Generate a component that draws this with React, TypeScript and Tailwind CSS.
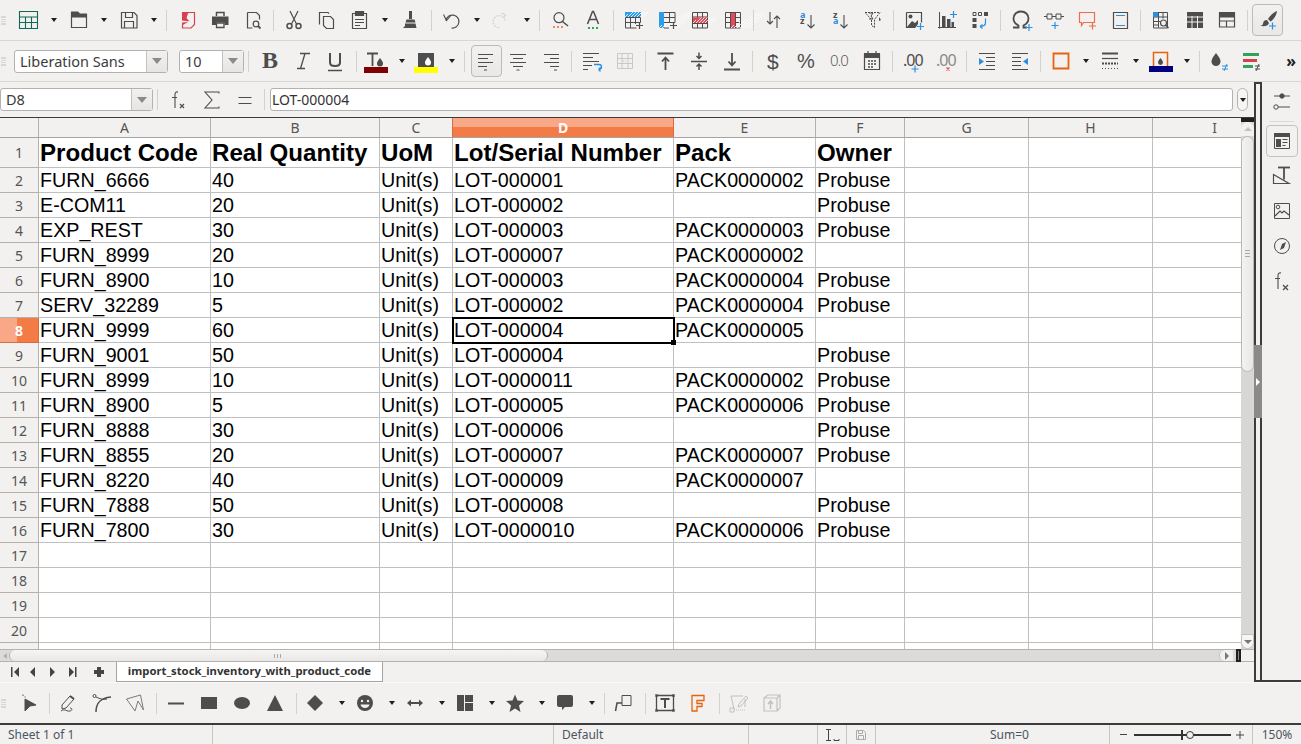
import type { ReactNode } from "react";

const UI = "font-['Noto_Sans','Open_Sans',sans-serif]";

function Ic({ children }: { children: ReactNode }) {
  return (
    <svg width="24" height="24" viewBox="0 0 24 24" fill="none" stroke="#4d4d4d" strokeWidth="1.2" className="block shrink-0 overflow-visible">
      {children}
    </svg>
  );
}

const boxed = "h-8 w-[31px] rounded-[4px] border border-[#bdbbb8] bg-gradient-to-b from-[#f2f1f0] to-[#e9e8e6]";

function Btn({ children, style }: { children: ReactNode; style?: string }) {
  return <div className={`flex shrink-0 items-center ${style ?? "h-[30px] w-[33px] pl-1"}`}>{children}</div>;
}

function Dd({ narrow }: { narrow?: boolean }) {
  return (
    <div className={`flex shrink-0 justify-center ${narrow ? "w-[17px]" : "w-[17.25px]"}`}>
      <div className="h-0 w-0 border-x-[3px] border-t-[4px] border-x-transparent border-t-[#1f1f1f]" />
    </div>
  );
}

function Sep() {
  return (
    <div className="flex w-2 shrink-0 justify-center">
      <div className="h-[21px] w-px bg-[#d3d1ce]" />
    </div>
  );
}

function Grip() {
  return <div className="ml-px h-[9px] w-[5px] shrink-0 border-y border-[#d9d7d4] bg-[linear-gradient(#d9d7d4_1px,transparent_1px)] bg-[length:5px_2px]" />;
}

const hatch = (x: number, y: number, w: number, h: number, c: string) => (
  <g>
    <rect x={x} y={y} width={w} height={h} fill={c} stroke="none" />
    {Array.from({ length: Math.ceil((w + h) / 3) }).map((_, i) => (
      <path key={i} d={`M${x + i * 3} ${y + h}l${Math.min(h, 3 + i * 3)} ${-Math.min(h, 3 + i * 3)}`} stroke="#fff" strokeWidth=".8" />
    ))}
  </g>
);

const Plus = ({ x, y, c = "#2b8fe0" }: { x: number; y: number; c?: string }) => (
  <path d={`M${x - 3.5} ${y}h7M${x} ${y - 3.5}v7`} stroke={c} strokeWidth="1.2" />
);

const icons: Record<string, ReactNode> = {
  table: (
    <g stroke="#0e6b55">
      <path d="M3.5 3.5h18v17h-18zM3.5 9h18M3.5 14.5h18M9.500 9v11.500M15.500 9v11.500" strokeWidth="1.100" />
    </g>
  ),
  open: (
    <g>
      <path d="M5 3.500h7l2 2h7v4H5z" fill="#4d4d4d" stroke="none" />
      <path d="M5.500 4v15.500h15V6" />
    </g>
  ),
  save: <path d="M4.500 4.500h12.500l3 3v12.500h-15.500zM8.500 4.500v5h7v-5M7.500 20v-6.500h9v6.500" />,
  pdf: (
    <g>
      <path d="M12 4.500h7.500v12l-3.500 3.500h-8.500v-3" stroke="#d8404f" />
      <path d="M7 4h6.500l-2 6 3 3.500-7.500-1z" fill="#d8404f" stroke="none" />
      <path d="M7 14.500l6-.5-6 3.500z" fill="#d8404f" stroke="none" />
    </g>
  ),
  print: (
    <g>
      <path d="M8.500 8V4.500h7.500V8" strokeWidth="1.500" />
      <path d="M4 8.500h16.500v8.500h-4v-2.500H8V17H4z" fill="#4d4d4d" stroke="none" />
      <path d="M8.500 15h7.500v4.500H8.500z" strokeWidth="1.300" />
    </g>
  ),
  preview: (
    <g>
      <path d="M6.500 4.500h9l3 3v4M6.500 4.500V20h5" />
      <circle cx="15" cy="16" r="2.800" />
      <path d="M17 18l2.500 2.500" strokeWidth="1.800" />
    </g>
  ),
  cut: (
    <g>
      <path d="M8 3l6.500 13M16 3L9.500 16" />
      <circle cx="7.500" cy="18" r="2.500" strokeWidth="1.500" />
      <circle cx="16.500" cy="18" r="2.500" strokeWidth="1.500" />
    </g>
  ),
  copy: (
    <g>
      <path d="M4.500 16.500V4.500h8.500l1 1" />
      <path d="M8.500 8.500h7l3 3v9h-7l-3-3z" fill="#f2f1f0" />
    </g>
  ),
  paste: (
    <g transform="translate(-1 0)">
      <path d="M8 5.500H5.500v15h14v-15H17" />
      <path d="M8.500 3.500h8v4h-8z" fill="#4d4d4d" />
      <path d="M8 11.500h9M8 14.500h9M8 17.500h5" strokeWidth="1" />
    </g>
  ),
  clone: (
    <g>
      <path d="M12.500 3v8" strokeWidth="3" />
      <path d="M8.500 11.500h8l1 3h-10z" fill="#4d4d4d" stroke="none" />
      <path d="M7 15.500h10.500l1 4.500H5l2-2z" fill="#4d4d4d" stroke="none" />
    </g>
  ),
  undo: (
    <g>
      <path d="M7 12.500a6.500 6.500 0 1 1 5.500 7.500" strokeWidth="1.200" />
      <path d="M4.500 6.500l3 6 4-4.500" strokeWidth="1.100" />
    </g>
  ),
  redo: (
    <g stroke="#d4d3d1">
      <path d="M16 12.500a6 6 0 1 0-5 7" strokeDasharray="2 1" />
      <path d="M12.500 5l4 2-2 3" />
    </g>
  ),
  find: (
    <g>
      <circle cx="11" cy="9.700" r="5" />
      <path d="M14.500 13.500l5.500 4.500" strokeWidth="1.500" />
      <path d="M5 19h2M9 19h2M13 19h2" stroke="#f08a65" strokeWidth="1.800" />
    </g>
  ),
  fontA: (
    <g>
      <path d="M6.500 16L11.500 3.500h1L17.500 16M8.500 11.500h7" strokeWidth="1.500" />
      <path d="M7 20h2M11 20h2M15 20h2" stroke="#2fa35a" strokeWidth="1.800" />
    </g>
  ),
  rowIns: (
    <g>
      {hatch(3, 4, 16, 5, "#2f9ce8")}
      <path d="M3.500 9.500h15M3.500 9.500v10.500h11M8.500 9.500v10.500M13.500 9.500v6.500M3.500 14.500h15M18.500 9.500v5" strokeWidth="1" />
      <Plus x={17.500} y={17.500} c="#4d4d4d" />
    </g>
  ),
  colIns: (
    <g>
      {hatch(4, 4, 5, 16, "#2f9ce8")}
      <path d="M9 4.500h11M9 9.500h11M9 14.500h11M9 20h5M14.500 4.500v10M20 4.500v10" strokeWidth="1" />
      <Plus x={18.500} y={17.500} c="#4d4d4d" />
    </g>
  ),
  rowDel: (
    <g>
      <path d="M4.500 4.500h15v15.500h-15zM4.500 9h15M4.500 15.500h15M9.500 4.500v5M14.500 4.500v5M9.500 15.500v4.500M14.500 15.500v4.500" strokeWidth="1" />
      {hatch(5, 9.500, 14, 5.500, "#e8495a")}
    </g>
  ),
  colDel: (
    <g>
      <path d="M4.500 4.500h15v15.500h-15zM4.500 9.500h15M4.500 14.500h15M9.500 4.500v15.500M14.500 4.500v15.500" strokeWidth="1" />
      {hatch(10, 5, 4, 15, "#e8495a")}
    </g>
  ),
  sort: <path d="M8 4v12M5 13l3 3 3-3M15 20V8M12 11l3-3 3 3" strokeWidth="1.100" />,
  sortAz: (
    <g>
      <text x="5" y="9.500" fontSize="9" fontWeight="700" fill="#2b8fe0" stroke="none" fontFamily="Noto Sans">a</text>
      <text x="5" y="16" fontSize="9" fontWeight="700" fill="#4d4d4d" stroke="none" fontFamily="Noto Sans">z</text>
      <path d="M16 7v13M12.500 16.500l3.500 3.500 3.500-3.500" strokeWidth="1.100" />
    </g>
  ),
  sortZa: (
    <g>
      <text x="5" y="9.500" fontSize="9" fontWeight="700" fill="#4d4d4d" stroke="none" fontFamily="Noto Sans">z</text>
      <text x="5" y="16" fontSize="9" fontWeight="700" fill="#2b8fe0" stroke="none" fontFamily="Noto Sans">a</text>
      <path d="M16 7v13M12.500 16.500l3.500 3.500 3.500-3.500" strokeWidth="1.100" />
    </g>
  ),
  filter: (
    <g strokeWidth="1">
      <path d="M4 4.500h15l-5.500 7v8l-3-2v-6z" strokeDasharray="2 1" />
      <path d="M8 5h4l-2 3 2 3H8" />
      <path d="M18 9l2 3-2 1z" fill="#4d4d4d" stroke="none" />
    </g>
  ),
  image: (
    <g>
      <path d="M4.500 4.500h15v10M4.500 4.500v15h9" />
      <circle cx="8.500" cy="8.500" r="2" fill="#4d4d4d" stroke="none" />
      <path d="M5 19l5-6 3 2 3-3v4l-2 3z" fill="#4d4d4d" stroke="none" />
      <Plus x={18.500} y={18.500} />
    </g>
  ),
  chart: (
    <g>
      <path d="M4.500 4v16.500M3 19.500h18" strokeWidth="1" />
      <path d="M7 8h3.500v11H7zM12 11h3.500v8H12zM16.500 14H19v5h-2.500z" fill="#4d4d4d" stroke="none" />
      <Plus x={18.500} y={6.500} />
    </g>
  ),
  pivot: (
    <g>
      <path d="M5 4.500h3v3H5zM10.500 4.500h3v3h-3z" strokeWidth="1" />
      <path d="M16 4h4v4h-4zM4.500 10h4v4h-4zM4.500 16h4v4h-4z" fill="#4d4d4d" stroke="none" />
      <path d="M17.500 10.500v4c0 3-2 4-5.500 4M12 18.500l2.500-2M12 18.500l2.500 2" stroke="#2b8fe0" />
    </g>
  ),
  omega: (
    <g>
      <path d="M4 19.500h5.500v-2C6.500 16 4.500 13.500 4.500 10.500 4.500 6.500 7.500 3.500 12 3.500s7.500 3 7.500 7c0 3-2 5.500-5 7v2H18" strokeWidth="1.800" />
      <Plus x={20} y={19.500} />
    </g>
  ),
  hyper: (
    <g strokeWidth="1">
      <path d="M2 8.500h3M5 6h5v5H5zM10 8.500h4M14 6h5v5h-5zM19 8.500h3" />
      <Plus x={13} y={17.500} />
    </g>
  ),
  comment: (
    <g>
      <path d="M4.500 4.500h15v10h-11l-2 3v-3h-2z" stroke="#ee6c4d" />
      <Plus x={17.500} y={18} c="#ee6c4d" />
    </g>
  ),
  header: (
    <g>
      <path d="M5.500 4.500h14v16h-14z" />
      <path d="M8 7.500h9M8 17.500h9" stroke="#2b8fe0" />
    </g>
  ),
  define: (
    <g>
      <path d="M4.500 4.500h14v15.500h-14zM4.500 9h14M4.500 13.500h7M4.500 17h5M9.500 4.500v15M14 4.500v6" strokeWidth="1" />
      <rect x="4" y="4" width="5" height="5" fill="#2b8fe0" stroke="none" />
      <circle cx="14.500" cy="15" r="3" fill="#f2f1f0" strokeWidth="1.200" />
      <path d="M16.500 17l3 3" strokeWidth="1.500" />
    </g>
  ),
  grid: (
    <g>
      <path d="M5 4h16v16H5z" fill="#4d4d4d" stroke="none" />
      <path d="M5 9h16M5 14h16M10 8v12M15.500 8v12" stroke="#f2f1f0" strokeWidth="1" />
    </g>
  ),
  freeze: (
    <g>
      <path d="M4 4.500h16v5H4z" fill="#4d4d4d" stroke="none" />
      <path d="M4.500 4.500h15v14.500h-15zM4.500 13h15M11.500 13v6" />
    </g>
  ),
  brush: (
    <g>
      <path d="M21 3c-3 1-7 4.500-9 8l2.500 2.500c3.500-2 6-6.500 6.500-10.500z" fill="#4d4d4d" stroke="none" />
      <path d="M11 12c-3 0-4 2-4 4-.5 1-1.500 1.500-3 1.500 3 1.500 8 1 9-2.500z" fill="#4d4d4d" stroke="none" />
      <Plus x={16.500} y={18} />
    </g>
  ),
  bold: <text x="5" y="19" fontSize="24" fontWeight="700" fontFamily="Liberation Serif" fill="#4d4d4d" stroke="none">B</text>,
  italic: <path d="M10 4.500h10M15 4.500L10.500 19.500M7 19.500h8" strokeWidth="1.300" />,
  underline: (
    <g>
      <path d="M7 4v9.500c0 2.500 2 3.500 5 3.500s5-1 5-3.500V4" strokeWidth="2" />
      <path d="M5 21.500h14" strokeWidth="1.500" />
    </g>
  ),
  fontColor: (
    <g>
      <path d="M3 4.500h11M8.500 4.500V17" strokeWidth="1.800" />
      <path d="M16 9c-2 2.500-3 4-3 5.500a3 3 0 0 0 6 0C19 13 18 11.500 16 9z" fill="#4d4d4d" stroke="none" />
      <rect x="0" y="18" width="24" height="6" fill="#800000" stroke="none" />
    </g>
  ),
  bgColor: (
    <g>
      <path d="M4 4h16v14H4z" fill="#4d4d4d" stroke="none" />
      <path d="M14 8c-2 2.500-3 4-3 5.500a3 3 0 0 0 6 0c0-1.500-1-3-3-5.500z" fill="#fff" stroke="none" />
      <rect x="0" y="18" width="24" height="6" fill="#ffff00" stroke="none" />
    </g>
  ),
  alignL: <path d="M4 5.500h15M4 9.500h10M4 13.500h15M4 17.500h9M10 21h3" strokeWidth="1" />,
  alignC: <path d="M4 5.500h16M7 9.500h10M4 13.500h16M7 17.500h10M10.500 21h3" strokeWidth="1" />,
  alignR: <path d="M5 5.500h15M11 9.500h9M5 13.500h15M11 17.500h9M15 21h3" strokeWidth="1" />,
  wrap: (
    <g strokeWidth="1">
      <path d="M3 4.500h16M3 8.500h10M3 12.500h16M3 16.500h9M3 20.500h5" />
      <path d="M14 15.500h5c2 0 2.500 1 2.500 2.500s-.5 2.500-3 2.500M18.500 20.500l2-2M18.500 20.500l2 2" stroke="#2b8fe0" strokeWidth="1.300" />
    </g>
  ),
  merge: (
    <g stroke="#c9c8c6" strokeWidth="1">
      <path d="M4.500 4.500h15v15h-15zM4.500 9.500h15M4.500 14.500h15M9 4.500v15M15 4.500v15" />
      <path d="M10 12h4" strokeDasharray="1 1" />
    </g>
  ),
  top: <path d="M3.500 4.500h16M11.500 9v12M8 12.500l3.500-4 3.500 4" strokeWidth="1.800" />,
  middle: <path d="M4 12.500h16M12 3.500v6M9.500 7l2.500 2.500L14.500 7M12 21v-6M9.500 17.500L12 15l2.500 2.500" strokeWidth="1.500" />,
  bottom: <path d="M4 20.500h16M12 4v12M8.500 12.500l3.500 4 3.500-4" strokeWidth="1.800" />,
  dollar: <text x="6" y="20" fontSize="21" fontFamily="Liberation Sans" fill="#4d4d4d" stroke="none">$</text>,
  percent: <text x="3" y="19" fontSize="20" fontFamily="Liberation Sans" fill="#4d4d4d" stroke="none">%</text>,
  number: <text x="3" y="17" fontSize="15" fontWeight="300" fontFamily="Noto Sans" fill="#5a5a5a" stroke="none" letterSpacing="-1">0.0</text>,
  calendar: (
    <g>
      <path d="M4.500 5.500h15v15h-15z" />
      <path d="M4 4h16v5H4z" fill="#4d4d4d" stroke="none" />
      <path d="M8 2v3M16 2v3" />
      <path d="M8 12h2M11 12h2M14 12h2M8 15h2M11 15h2M14 15h2M8 18h2M11 18h2" strokeWidth="1.500" />
    </g>
  ),
  decAdd: (
    <g>
      <text x="2" y="17" fontSize="16" fontFamily="Noto Sans" fill="#4d4d4d" stroke="none" letterSpacing="-1">.00</text>
      <Plus x={14} y={20} />
    </g>
  ),
  decDel: (
    <g>
      <text x="2" y="17" fontSize="16" fontFamily="Noto Sans" fill="#8a8a8a" stroke="none" letterSpacing="-1">.00</text>
      <path d="M12.500 18.500l3 3M15.500 18.500l-3 3" stroke="#e8495a" strokeWidth="1.200" />
    </g>
  ),
  indentUp: (
    <g strokeWidth="1">
      <path d="M4 4.500h16M11 8.500h9M11 12.500h9M11 16.500h9M4 20.500h16" />
      <path d="M4 9l5 3.500-5 3.500z" fill="#2b8fe0" stroke="none" />
    </g>
  ),
  indentDown: (
    <g strokeWidth="1">
      <path d="M4 4.500h16M4 8.500h9M4 12.500h9M4 16.500h9M4 20.500h16" />
      <path d="M20 9l-5 3.500 5 3.500z" fill="#2b8fe0" stroke="none" />
    </g>
  ),
  borders: <path d="M4.500 4.500h15v15h-15z" stroke="#e8620e" strokeWidth="1.800" />,
  lines: (
    <g strokeWidth="1">
      <path d="M3 4.500h16" strokeWidth="2" />
      <path d="M3 9.500h16" strokeWidth="1.200" />
      <path d="M3 14.500h16" strokeWidth="2" strokeDasharray="2 1" />
      <path d="M3 19.500h16" strokeWidth="1" strokeDasharray="1 2" />
    </g>
  ),
  borderColor: (
    <g>
      <path d="M4.500 3.500h14v15h-14z" stroke="#e8620e" strokeWidth="1.500" />
      <path d="M11.500 9c-1.500 2-2.500 3-2.500 4.500a2.500 2.500 0 0 0 5 0c0-1.500-1-2.500-2.500-4.500z" fill="#4d4d4d" stroke="none" />
      <rect x="0" y="17" width="24" height="6" fill="#000080" stroke="none" />
    </g>
  ),
  condDrop: (
    <g>
      <path d="M9 4c-3 4-4.500 6-4.500 8.500a4.500 4.500 0 0 0 9 0C13.500 10 12 8 9 4z" fill="#4d4d4d" stroke="none" />
      <path d="M15 17h6M15 20h6M17 22l3-7" stroke="#2b8fe0" strokeWidth="1" />
    </g>
  ),
  condBars: (
    <g>
      <path d="M3 4h16v3H3z" fill="#2fa35a" stroke="none" />
      <path d="M3 10h14v3H3z" fill="#d8404f" stroke="none" />
      <path d="M3 16h10v3H3z" fill="#2fa35a" stroke="none" />
      <path d="M15 17h5M15 20h5M16 22l3-7" strokeWidth="1" />
    </g>
  ),
  select: (
    <g>
      <path d="M9 8l11 6-6 1-5 5z" fill="#4d4d4d" strokeWidth="1" />
      <path d="M7 3.500v1.500M9 5.500v1" strokeWidth="1" />
    </g>
  ),
  freehand: (
    <g strokeWidth="1">
      <path d="M5 14l8-9 4 3-8 9-4 1z" />
      <path d="M13 5l4 3" strokeWidth="2" />
      <path d="M4 20c4-3 6 1 9 0s2-3 0-3" />
    </g>
  ),
  curve: (
    <g strokeWidth="1.500">
      <path d="M6 21c0-9 4-14 15-15" />
      <circle cx="4.500" cy="5" r="1.500" strokeWidth="1" />
      <path d="M6 6c4 2 8 3 11 2" strokeWidth="1" />
    </g>
  ),
  polygon: <path d="M3.500 8l14-4 3 15-5.500-9-3 10z" stroke="#7a7a7a" strokeWidth="1" />,
  line: <path d="M4 12.500h16" strokeWidth="2" />,
  rect: <path d="M4 6h16v12H4z" fill="#4d4d4d" stroke="none" />,
  ellipse: <ellipse cx="12" cy="12" rx="8" ry="6" fill="#4d4d4d" stroke="none" />,
  triangle: <path d="M12 4l8 16H4z" fill="#4d4d4d" stroke="none" />,
  diamond: <path d="M11 4l8 8-8 8-8-8z" fill="#4d4d4d" stroke="none" />,
  smile: (
    <g>
      <circle cx="11" cy="12" r="8" fill="#4d4d4d" stroke="none" />
      <circle cx="8" cy="10" r="1.200" fill="#f2f1f0" stroke="none" />
      <circle cx="14" cy="10" r="1.200" fill="#f2f1f0" stroke="none" />
      <path d="M6.500 13.500h9c-.5 2-2 3.500-4.500 3.500s-4-1.500-4.500-3.500z" fill="#f2f1f0" stroke="none" />
    </g>
  ),
  arrow: <path d="M3 12l4-3.500V11h8V8.500l4 3.500-4 3.500V13H7v2.500z" fill="#4d4d4d" stroke="none" />,
  flow: <path d="M3 4h7v16H3zM11 4h8v7h-8zM11 12h8v8h-8z" fill="#4d4d4d" stroke="none" />,
  star: <path d="M11 3.500l2.500 6 6.500.5-5 4.500 1.500 6.500-5.500-3.500-5.500 3.500 1.500-6.500-5-4.500 6.500-.5z" fill="#4d4d4d" stroke="none" />,
  callout: <path d="M5 4h12a2 2 0 0 1 2 2v8a2 2 0 0 1-2 2h-6l-3 3v-3H5a2 2 0 0 1-2-2V6a2 2 0 0 1 2-2z" fill="#4d4d4d" stroke="none" />,
  connector: (
    <g>
      <path d="M3.500 20l1.500-8h5" strokeWidth="1.500" />
      <path d="M10 4.500h9v10h-9z" strokeWidth="1" />
    </g>
  ),
  textbox: (
    <g>
      <path d="M3.500 4.500h17v15h-17z" strokeWidth="1.300" />
      <path d="M7.500 8h9M12 8v9" strokeWidth="2" />
      <path d="M2 3h3v3H2zM19 3h3v3h-3zM2 18h3v3H2zM19 18h3v3h-3z" fill="#4d4d4d" stroke="none" opacity=".6" />
    </g>
  ),
  fontwork: <path d="M6 4.500h12v5h-7v3h5v3h-5V20H6z" stroke="#e8620e" strokeWidth="1.300" />,
  points: (
    <g stroke="#c2c1bf" strokeWidth="1">
      <path d="M4 5h12M18 8v8M4 5l3 13M12 13L19 5l2 2-7 8-3 1z" />
      <path d="M3 17h4v4H3z" />
      <path d="M7 19h12" strokeDasharray="1 1" />
    </g>
  ),
  extrude: (
    <g stroke="#c2c1bf" strokeWidth="1.200">
      <path d="M4 7h13v13H4zM4 7l4-3h12v13l-3 3M17 7l3-3" />
      <path d="M10.500 18v-7M8 13l2.500-3 2.500 3" strokeWidth="1.500" />
    </g>
  ),
  props: (
    <g strokeWidth="1">
      <path d="M4 7h16M4 18h16" />
      <circle cx="12" cy="7" r="2.200" fill="#4d4d4d" />
      <circle cx="6" cy="18" r="2.200" fill="#f2f1f0" />
    </g>
  ),
  styles: (
    <g>
      <path d="M4.500 4.500h15v15h-15z" strokeWidth="1" />
      <path d="M4 4h16v4H4zM6 10h5v8H6z" fill="#4d4d4d" stroke="none" />
      <path d="M12.500 10.500h5M12.500 13.500h5M12.500 16.500h3" strokeWidth="1" />
    </g>
  ),
  shapes: (
    <g strokeWidth="1.200">
      <path d="M8 3.500h12" strokeWidth="1.800" />
      <path d="M14 3.500v12" strokeWidth="1.800" />
      <path d="M3.500 10.500L19 19.500H3.500z" />
    </g>
  ),
  gallery: (
    <g strokeWidth="1">
      <path d="M4.500 4.500h15v15h-15z" />
      <circle cx="8" cy="8" r="1.800" />
      <path d="M5 17l5-5 2 2 2-2 5 4" strokeWidth="1.200" />
    </g>
  ),
  navigator: (
    <g strokeWidth="1">
      <circle cx="12" cy="12" r="7.500" />
      <path d="M16 8l-2 6-4 2 2-6z" fill="#4d4d4d" stroke="none" />
    </g>
  ),
  fxSide: (
    <g>
      <path d="M11 4c-2-.5-3 .5-3 2.500V20M5 9.500h5" strokeWidth="1.100" />
      <path d="M13 16l5 5M18 16l-5 5" strokeWidth="1.300" />
    </g>
  ),
  sum: <path d="M19 5.500V4H5l7 8-7 8h14v-1.500" strokeWidth="1.100" />,
  equal: <path d="M5.500 9.500h13M5.500 15.500h13" strokeWidth="1.200" />,
  fx: (
    <g>
      <path d="M11 4c-2-.5-3 .5-3 2.500V20M5 9.500h5" strokeWidth="1.100" />
      <path d="M13 16l4 4M17 16l-4 4" strokeWidth="1.200" />
    </g>
  ),
};

const Icon = ({ n, style }: { n: string; style?: string }) => (
  <Btn style={style}>
    <Ic>{icons[n]}</Ic>
  </Btn>
);

function Combo({ w, text }: { w: string; text: string }) {
  return (
    <div className={`flex h-[23px] shrink-0 rounded-[3px] border border-[#b4b2ae] bg-white ${w}`}>
      <div className="flex-1 truncate pl-[5px] text-[14.5px] leading-[21px] text-[#3c3c3c]">{text}</div>
      <div className="flex w-[21px] items-center justify-center border-l border-[#c4c2bf] bg-gradient-to-b from-[#f2f1f0] to-[#e6e5e3]">
        <div className="h-0 w-0 border-x-[5px] border-t-[6px] border-x-transparent border-t-[#8a8a8a]" />
      </div>
    </div>
  );
}

const cols: { name: string; w: string }[] = [
  { name: "A", w: "w-[172px]" },
  { name: "B", w: "w-[169px]" },
  { name: "C", w: "w-[73px]" },
  { name: "D", w: "w-[221px]" },
  { name: "E", w: "w-[142px]" },
  { name: "F", w: "w-[89px]" },
  { name: "G", w: "w-[124px]" },
  { name: "H", w: "w-[124px]" },
  { name: "I", w: "w-[124px]" },
];

const rows: string[][] = [
  ["Product Code", "Real Quantity", "UoM", "Lot/Serial Number", "Pack", "Owner"],
  ["FURN_6666", "40", "Unit(s)", "LOT-000001", "PACK0000002", "Probuse"],
  ["E-COM11", "20", "Unit(s)", "LOT-000002", "", "Probuse"],
  ["EXP_REST", "30", "Unit(s)", "LOT-000003", "PACK0000003", "Probuse"],
  ["FURN_8999", "20", "Unit(s)", "LOT-000007", "PACK0000002", ""],
  ["FURN_8900", "10", "Unit(s)", "LOT-000003", "PACK0000004", "Probuse"],
  ["SERV_32289", "5", "Unit(s)", "LOT-000002", "PACK0000004", "Probuse"],
  ["FURN_9999", "60", "Unit(s)", "LOT-000004", "PACK0000005", ""],
  ["FURN_9001", "50", "Unit(s)", "LOT-000004", "", "Probuse"],
  ["FURN_8999", "10", "Unit(s)", "LOT-0000011", "PACK0000002", "Probuse"],
  ["FURN_8900", "5", "Unit(s)", "LOT-000005", "PACK0000006", "Probuse"],
  ["FURN_8888", "30", "Unit(s)", "LOT-000006", "", "Probuse"],
  ["FURN_8855", "20", "Unit(s)", "LOT-000007", "PACK0000007", "Probuse"],
  ["FURN_8220", "40", "Unit(s)", "LOT-000009", "PACK0000007", ""],
  ["FURN_7888", "50", "Unit(s)", "LOT-000008", "", "Probuse"],
  ["FURN_7800", "30", "Unit(s)", "LOT-0000010", "PACK0000006", "Probuse"],
  [],
  [],
  [],
  [],
  [],
];

function Sheet() {
  return (
    <div className="flex min-h-0 flex-1">
      <div className="min-w-0 flex-1 overflow-hidden">
        {/* column header */}
        <div className="flex h-5 border-b border-[#a6a4a0]">
          <div className="w-[39px] shrink-0 border-r border-[#b4b2ae] bg-[#f2f1f0]" />
          {cols.map((c) =>
            c.name === "D" ? (
              <div key={c.name} className="-ml-px flex w-[222px] shrink-0 items-center justify-center border-x border-[#d96b3c] bg-[linear-gradient(#f9a887_0%,#f9a887_47%,#f37b46_47%,#f37b46_100%)] text-[14px] font-bold text-white">
                {c.name}
              </div>
            ) : (
              <div key={c.name} className={`flex shrink-0 items-center justify-center border-r border-[#b4b2ae] bg-[#f2f1f0] text-[14px] text-[#555] ${c.w}`}>
                {c.name}
              </div>
            ),
          )}
        </div>
        {rows.map((r, i) => (
          <div key={i} className={`flex ${i === 0 ? "h-[30px]" : "h-[25px]"}`}>
            <div
              className={`flex w-[39px] shrink-0 items-center justify-center border-b border-r text-[14px] ${
                i === 7
                  ? "border-[#d96b3c] bg-[linear-gradient(90deg,#f9a887_0%,#f9a887_45%,#f37b46_45%,#f37b46_100%)] font-bold text-white"
                  : "border-[#b4b2ae] bg-[#f2f1f0] text-[#555]"
              }`}
            >
              {i < 20 ? i + 1 : ""}
            </div>
            {cols.map((c, j) => (
              <div
                key={c.name}
                className={`relative flex shrink-0 items-center overflow-visible whitespace-nowrap border-b border-r border-[#c0c0c0] bg-white pl-px pt-0.5 font-['Liberation_Sans',Arial,sans-serif] text-black ${c.w} ${
                  i === 0 ? "text-[24.1px] font-bold" : "text-[19.7px]"
                } ${i === 7 && j === 3 ? "z-10 outline-2 -outline-offset-1 outline-black" : ""}`}
              >
                {r[j]}
                {i === 7 && j === 3 && <div className="absolute -bottom-[3px] -right-[3px] h-[5px] w-[5px] bg-black" />}
              </div>
            ))}
          </div>
        ))}
      </div>
      {/* vertical scrollbar */}
      <div className="flex w-[13px] shrink-0 flex-col bg-[#d8d7d5]">
        <div className="h-1 shrink-0 bg-[#1f1f1f]" />
        <div className="flex h-3.5 shrink-0 items-center justify-center rounded-t-full bg-[#f2f1f0]">
          <div className="h-0 w-0 border-x-[4px] border-b-[4px] border-x-transparent border-b-[#c4c2bf]" />
        </div>
        <div className="flex h-[236px] shrink-0 items-center justify-center rounded-full border border-[#bbb9b6] bg-gradient-to-r from-[#f4f3f2] to-[#e8e7e5]">
          <div className="h-[9px] w-[5px] bg-[linear-gradient(#aaa_1px,transparent_1px)] bg-[length:5px_3px]" />
        </div>
        <div className="flex-1" />
        <div className="flex h-[15px] shrink-0 items-center justify-center rounded-b-full border border-[#c4c2bf] bg-[#f6f5f4]">
          <div className="h-0 w-0 border-x-[4px] border-t-[4px] border-x-transparent border-t-[#777]" />
        </div>
      </div>
    </div>
  );
}

function HScroll() {
  return (
    <div className="flex h-[13px] shrink-0 items-center border-y border-[#b4b2ae] bg-[#dcdbd9]">
      <div className="flex w-[9px] shrink-0 items-center justify-center">
        <div className="h-0 w-0 border-y-[3px] border-r-[4px] border-y-transparent border-r-[#b4b2ae]" />
      </div>
      <div className="flex h-[11px] w-[539px] shrink-0 items-center justify-center rounded-full border-x border-[#b4b2ae] bg-gradient-to-b from-[#f6f5f4] to-[#e9e8e6]">
        <div className="h-[4px] w-[9px] bg-[linear-gradient(90deg,#aaa_1px,transparent_1px)] bg-[length:3px_4px]" />
      </div>
      <div className="flex-1" />
      <div className="flex h-[11px] w-[14px] shrink-0 items-center justify-center rounded-l-full border-l border-[#c4c2bf] bg-[#f2f1f0]">
        <div className="h-0 w-0 border-y-[4px] border-l-[4px] border-y-transparent border-l-[#777]" />
      </div>
      <div className="w-[3px] shrink-0" />
      <div className="flex h-[13px] w-[5px] shrink-0 justify-center bg-[#1f1f1f]">
        <div className="h-[9px] w-px self-center bg-[#8a8a8a]" />
      </div>
      <div className="w-[13px] shrink-0 self-stretch bg-[#f2f1f0]" />
    </div>
  );
}

function Tabs() {
  return (
    <div className="flex h-5 shrink-0 items-start bg-[#f2f1f0]">
      <div className="flex w-[116px] shrink-0 items-center self-center">
        <svg width="116" height="16" viewBox="0 0 116 16" fill="#444" className="block">
          <path d="M11 3h1.500v10H11zM19 3v10l-5-5zM30 8l5-5v10zM50 3l5 5-5 5zM69 3l5 5-5 5zM75 3h1.500v10H75zM97 3h4v3h3v4h-3v3h-4v-3h-3V6h3z" />
        </svg>
      </div>
      <div className="flex h-5 w-[267px] items-center justify-center border-x border-b border-[#a6a4a0] bg-white text-[11.3px] font-bold text-[#333]">
        import_stock_inventory_with_product_code
      </div>
    </div>
  );
}

function StatusCell({ w, children, center }: { w: string; children?: ReactNode; center?: boolean }) {
  return (
    <div className={`flex h-full shrink-0 items-center border-r border-[#c9c7c4] ${w} ${center ? "justify-center" : "pl-2"}`}>
      {children}
    </div>
  );
}

function Toolbar({ children, extra }: { children: ReactNode; extra: string }) {
  return <div className={`flex h-[41px] shrink-0 items-center bg-[#f2f1f0] ${extra}`}>{children}</div>;
}

export default function App() {
  return (
    <div className={`flex h-[744px] w-[1301px] flex-col overflow-hidden bg-[#f2f1f0] text-[#3c3c3c] ${UI}`}>
      <Toolbar extra="border-b border-[#d9d7d4]">
        <Grip />
        <div className="w-1.5 shrink-0" />
        <Icon n="table" />
        <Dd />
        <Icon n="open" />
        <Dd />
        <Icon n="save" />
        <Dd />
        <Sep />
        <Icon n="pdf" />
        <Icon n="print" />
        <Icon n="preview" />
        <Sep />
        <Icon n="cut" />
        <Icon n="copy" />
        <Icon n="paste" />
        <Dd />
        <Icon n="clone" />
        <Sep />
        <Icon n="undo" />
        <Dd />
        <Icon n="redo" />
        <Dd />
        <Sep />
        <Icon n="find" />
        <Icon n="fontA" />
        <Sep />
        <Icon n="rowIns" />
        <Icon n="colIns" />
        <Icon n="rowDel" />
        <Icon n="colDel" />
        <Sep />
        <Icon n="sort" />
        <Icon n="sortAz" />
        <Icon n="sortZa" />
        <Icon n="filter" />
        <Sep />
        <Icon n="image" />
        <Icon n="chart" />
        <Icon n="pivot" />
        <Sep />
        <Icon n="omega" />
        <Icon n="hyper" />
        <Icon n="comment" />
        <Icon n="header" />
        <Sep />
        <Icon n="define" />
        <Icon n="grid" />
        <Icon n="freeze" />
        <Sep />
        <Icon n="brush" style={`${boxed} pl-[3px]`} />
      </Toolbar>

      <Toolbar extra="border-b border-[#d9d7d4]">
        <Grip />
        <div className="w-2 shrink-0" />
        <Combo w="w-[154px]" text="Liberation Sans" />
        <div className="w-[11px] shrink-0" />
        <Combo w="w-[65px]" text="10" />
        <div className="flex w-[9px] shrink-0 justify-center">
          <div className="h-[21px] w-px bg-[#d3d1ce]" />
        </div>
        <Icon n="bold" />
        <Icon n="italic" />
        <Icon n="underline" />
        <Sep />
        <Icon n="fontColor" />
        <Dd />
        <Icon n="bgColor" />
        <Dd />
        <Sep />
        <Icon n="alignL" style={`${boxed} ml-[2px] pl-[2px]`} />
        <Icon n="alignC" />
        <Icon n="alignR" />
        <Sep />
        <Icon n="wrap" />
        <Icon n="merge" />
        <Sep />
        <Icon n="top" />
        <Icon n="middle" />
        <Icon n="bottom" />
        <Sep />
        <Icon n="dollar" />
        <Icon n="percent" />
        <Icon n="number" />
        <Icon n="calendar" />
        <Sep />
        <Icon n="decAdd" />
        <Icon n="decDel" />
        <Sep />
        <Icon n="indentUp" />
        <Icon n="indentDown" />
        <Sep />
        <Icon n="borders" />
        <Dd />
        <Icon n="lines" />
        <Dd />
        <Icon n="borderColor" />
        <Dd />
        <Sep />
        <Icon n="condDrop" />
        <Icon n="condBars" />
        <div className="ml-auto pr-[5px] text-[16px] font-bold leading-none text-[#222]">»</div>
      </Toolbar>

      <div className="flex min-h-0 flex-1">
        <div className="flex w-[1254px] shrink-0 flex-col">
          {/* formula bar */}
          <div className="flex h-9 shrink-0 items-center border-b border-[#3c3c3c]">
            <Combo w="w-[153px]" text="D8" />
            <div className="ml-1 h-[21px] w-px bg-[#d3d1ce]" />
            <div className="flex w-[106px] shrink-0 items-center pl-[5px]">
              <Icon n="fx" />
              <Icon n="sum" />
              <Icon n="equal" />
            </div>
            <div className="h-[21px] w-px bg-[#d3d1ce]" />
            <div className="ml-[5px] flex h-[23px] w-[963px] shrink-0 items-center rounded-[3px] border border-[#b4b2ae] bg-white pl-px text-[14px] text-[#333]">
              LOT-000004
            </div>
            <div className="ml-1 flex h-[23px] w-[11px] shrink-0 items-center justify-center rounded-full border border-[#b4b2ae] bg-[#f6f5f4]">
              <div className="h-0 w-0 border-x-[3px] border-t-[4px] border-x-transparent border-t-[#1f1f1f]" />
            </div>
          </div>
          <Sheet />
          <HScroll />
          <Tabs />
        </div>

        {/* splitter */}
        <div className="flex w-2 shrink-0 flex-col border-x-2 border-y-2 border-[#3c3c3c] bg-[#f2f1f0]">
          <div className="-mx-0.5 mt-[261px] flex h-[73px] items-center bg-[#8a8a8a]">
            <div className="ml-0.5 h-0 w-0 border-y-[4px] border-l-[4px] border-y-transparent border-l-white" />
          </div>
        </div>

        {/* side deck */}
        <div className="flex flex-1 flex-col items-center border-b-2 border-[#3c3c3c] bg-[#f2f1f0] pt-[7px]">
          <div className="flex h-[24px] items-center">
            <Ic>{icons.props}</Ic>
          </div>
          <div className="mt-2 h-px w-[24px] bg-[#dcdad7]" />
          <div className="mt-[3px] flex h-8 w-8 items-center justify-center rounded-[4px] border border-[#c4c2bf]">
            <Ic>{icons.styles}</Ic>
          </div>
          <div className="mt-[3px] flex h-8 items-center">
            <Ic>{icons.shapes}</Ic>
          </div>
          <div className="mt-[3px] flex h-8 items-center">
            <Ic>{icons.gallery}</Ic>
          </div>
          <div className="mt-[3px] flex h-8 items-center">
            <Ic>{icons.navigator}</Ic>
          </div>
          <div className="mt-[3px] flex h-8 items-center">
            <Ic>{icons.fxSide}</Ic>
          </div>
        </div>
      </div>

      <Toolbar extra="border-t border-[#fbfafa]">
        <Grip />
        <div className="w-1.5 shrink-0" />
        <Icon n="select" />
        <Sep />
        <Icon n="freehand" />
        <Icon n="curve" />
        <Icon n="polygon" />
        <Sep />
        <Icon n="line" />
        <Icon n="rect" />
        <Icon n="ellipse" />
        <Icon n="triangle" />
        <Sep />
        <Icon n="diamond" />
        <Dd narrow />
        <Icon n="smile" />
        <Dd narrow />
        <Icon n="arrow" />
        <Dd narrow />
        <Icon n="flow" />
        <Dd narrow />
        <Icon n="star" />
        <Dd narrow />
        <Icon n="callout" />
        <Dd narrow />
        <Sep />
        <Icon n="connector" />
        <Sep />
        <Icon n="textbox" />
        <Icon n="fontwork" />
        <Sep />
        <Icon n="points" />
        <Icon n="extrude" />
      </Toolbar>

      {/* status bar */}
      <div className="flex h-[21px] shrink-0 items-center border-t-2 border-[#3c3c3c] text-[12px] text-[#4a5560]">
        <StatusCell w="w-[213px]">Sheet 1 of 1</StatusCell>
        <StatusCell w="w-[341px]" />
        <StatusCell w="w-[195px]">Default</StatusCell>
        <StatusCell w="w-[69px]" />
        <StatusCell w="w-[29px]" center>
          <svg width="16" height="14" viewBox="0 0 16 14" fill="none" stroke="#444" strokeWidth="1">
            <path d="M2 1.500h5M2 12.500h5M4.500 1.500v11M10 12.500h5M10 11v1.500M15 11v1.500" />
          </svg>
        </StatusCell>
        <StatusCell w="w-[29px]" center>
          <svg width="12" height="12" viewBox="0 0 12 12" fill="none" stroke="#aaa" strokeWidth="1">
            <path d="M1.500 1.500h7l2 2v7h-9zM3.500 1.500v3h4v-3M3.500 10.500v-4h5v4" />
          </svg>
        </StatusCell>
        <div className="flex h-full w-[234px] shrink-0 items-center border-r border-[#c9c7c4] pl-[114px]">Sum=0</div>
        <div className="flex h-full w-[143px] shrink-0 items-center border-r border-[#c9c7c4] pl-[10px]">
          <div className="h-px w-[7px] shrink-0 bg-[#444]" />
          <div className="relative ml-[7px] h-0.5 w-[97px] shrink-0 bg-[#333]">
            <div className="absolute left-[47px] top-[-4px] h-[10px] w-0.5 bg-[#333]" />
            <div className="absolute left-[52px] top-[-3px] h-[8px] w-[8px] rounded-full border border-[#333] bg-[#f2f1f0]" />
          </div>
          <svg width="8" height="8" viewBox="0 0 8 8" stroke="#444" strokeWidth="1" className="ml-[5px] shrink-0">
            <path d="M0 4h8M4 0v8" />
          </svg>
        </div>
        <div className="flex-1 text-center">150%</div>
      </div>
    </div>
  );
}
